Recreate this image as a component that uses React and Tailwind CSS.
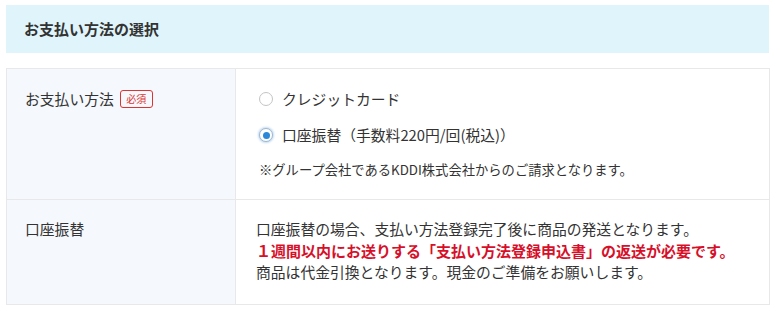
import { useState } from 'react'

const font = { fontFamily: '"Noto Sans CJK JP", "Noto Sans", sans-serif' }

function Radio({ checked, label, onSelect }) {
  return (
    <label className="flex items-center gap-[9px] cursor-pointer" onClick={onSelect}>
      {checked ? (
        <span className="flex h-[14px] w-[14px] items-center justify-center rounded-full border border-[#9fb7cc] bg-white shadow-[0_0_2px_1px_rgba(80,150,220,0.35)]">
          <span className="h-[7px] w-[7px] rounded-full bg-[#2b87d8]" />
        </span>
      ) : (
        <span className="h-[14px] w-[14px] rounded-full border border-[#c4c4c4] bg-white" />
      )}
      <span className="text-[14.8px] leading-[20px] text-[#333]">{label}</span>
    </label>
  )
}

export default function App() {
  const [method, setMethod] = useState('bank')

  return (
    <div className="w-[780px] h-[316px] bg-white px-[6px] pt-[5px]" style={font}>
      <div className="flex h-[48px] items-center bg-[#e0f5fb] px-[18px] w-[763px]">
        <h2 className="text-[15px] font-bold text-[#333]">お支払い方法の選択</h2>
      </div>

      <div className="mt-[15px] w-[764px] border border-[#e8e8e8]">
        <div className="flex h-[131px] border-b border-[#e8e8e8]">
          <div className="w-[229px] shrink-0 border-r border-[#e8e8e8] bg-[#f5f8fc] pl-[18px] pt-[20px]">
            <div className="flex items-center gap-[6px] text-[14.8px] leading-[20px] text-[#333]">
              お支払い方法
              <span className="flex h-[18px] w-[33px] items-center justify-center rounded-[3px] border border-[#d33] text-[10px] leading-none text-[#d33]">
                必須
              </span>
            </div>
          </div>
          <div className="pl-[23px] pt-[20px]">
            <div className="flex flex-col gap-[16px]">
              <Radio
                checked={method === 'card'}
                label="クレジットカード"
                onSelect={() => setMethod('card')}
              />
              <Radio
                checked={method === 'bank'}
                label="口座振替（手数料220円/回(税込)）"
                onSelect={() => setMethod('bank')}
              />
            </div>
            <p className="mt-[16px] text-[13.3px] leading-[18px] text-[#333]">
              ※グループ会社であるKDDI株式会社からのご請求となります。
            </p>
          </div>
        </div>

        <div className="flex h-[104px]">
          <div className="w-[229px] shrink-0 border-r border-[#e8e8e8] bg-[#f5f8fc] pl-[18px] pt-[18px]">
            <p className="text-[14.8px] leading-[21px] text-[#333]">口座振替</p>
          </div>
          <div className="pl-[20px] pt-[18px] text-[14.8px] leading-[21.5px] text-[#333]">
            <p>口座振替の場合、支払い方法登録完了後に商品の発送となります。</p>
            <p className="text-[15px] font-bold text-[#d7102a]">
              １週間以内にお送りする「支払い方法登録申込書」の返送が必要です。
            </p>
            <p>商品は代金引換となります。現金のご準備をお願いします。</p>
          </div>
        </div>
      </div>
    </div>
  )
}
